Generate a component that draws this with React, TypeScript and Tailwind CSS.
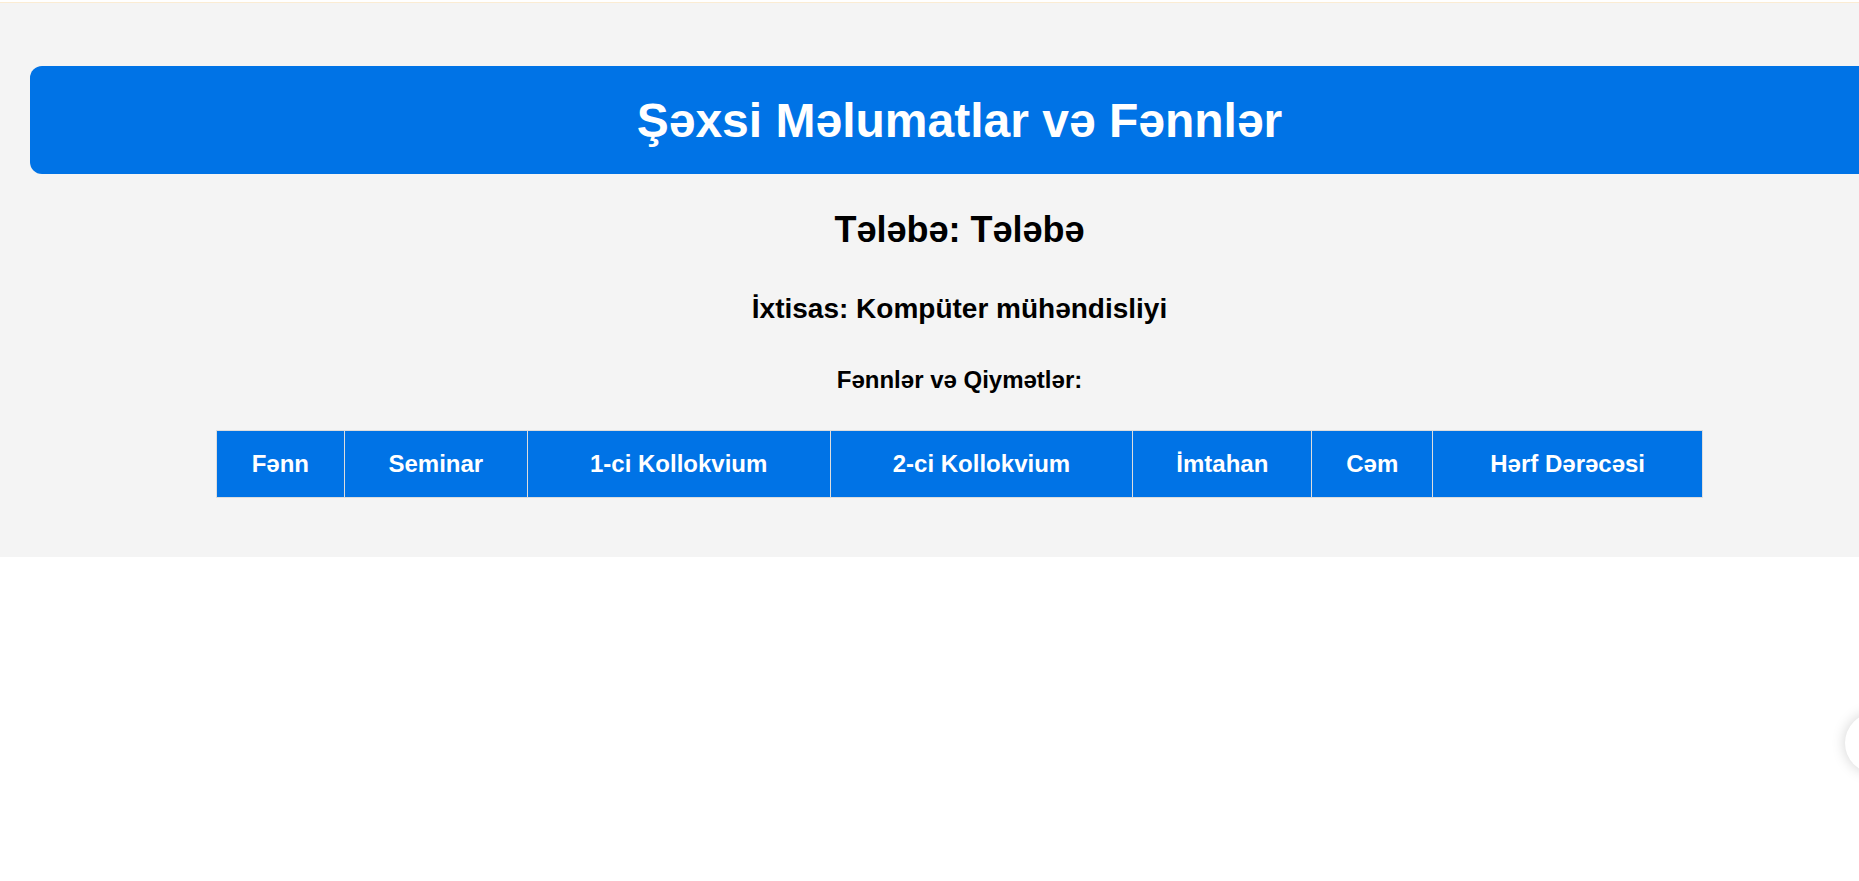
export default function App() {
  const columns = [
    { label: "Fənn", w: "w-[128px]" },
    { label: "Seminar", w: "w-[183px]" },
    { label: "1-ci Kollokvium", w: "w-[303px]" },
    { label: "2-ci Kollokvium", w: "w-[303px]" },
    { label: "İmtahan", w: "w-[179px]" },
    { label: "Cəm", w: "w-[121px]" },
    { label: "Hərf Dərəcəsi", w: "w-[270px]" },
  ];

  return (
    <div className="relative min-h-screen w-full overflow-hidden bg-white font-['Liberation_Sans',Arial,sans-serif] text-black">
      {/* gray page block */}
      <div className="bg-[#f4f4f4] pb-[59px] pl-[30px]">
        <div className="-ml-[30px] mt-[2px] h-px w-[1859px] bg-[#fbecd3]" />

        <header className="mt-[63px] flex h-[108px] w-[1859px] items-center justify-center rounded-[12px] bg-[#0073e6]">
          <h1 className="text-[48px] font-bold leading-[55px] text-white">Şəxsi Məlumatlar və Fənnlər</h1>
        </header>

        <div className="flex w-[1859px] flex-col items-center">
          <h2 className="mt-[35px] text-[36px] font-bold leading-[41px]">Tələbə: Tələbə</h2>
          <h3 className="mt-[43px] text-[28px] font-bold leading-[32px]">İxtisas: Kompüter mühəndisliyi</h3>
          <h4 className="mt-[41px] text-[24px] font-bold leading-[28px]">Fənnlər və Qiymətlər:</h4>

          <table className="mt-[36px] w-[80%] border-collapse">
            <thead>
              <tr>
                {columns.map((c) => (
                  <th
                    key={c.label}
                    className={`${c.w} border border-[#dddddd] bg-[#0073e6] px-[18px] py-[19px] text-center text-[24px] font-bold leading-[28px] text-white`}
                  >
                    {c.label}
                  </th>
                ))}
              </tr>
            </thead>
            <tbody></tbody>
          </table>
        </div>
      </div>

      {/* floating round button, mostly off-screen */}
      <div className="absolute left-[1845px] top-[713px] h-[60px] w-[60px] rounded-full bg-white shadow-[0_0_14px_rgba(0,0,0,0.18)]" />
    </div>
  );
}
